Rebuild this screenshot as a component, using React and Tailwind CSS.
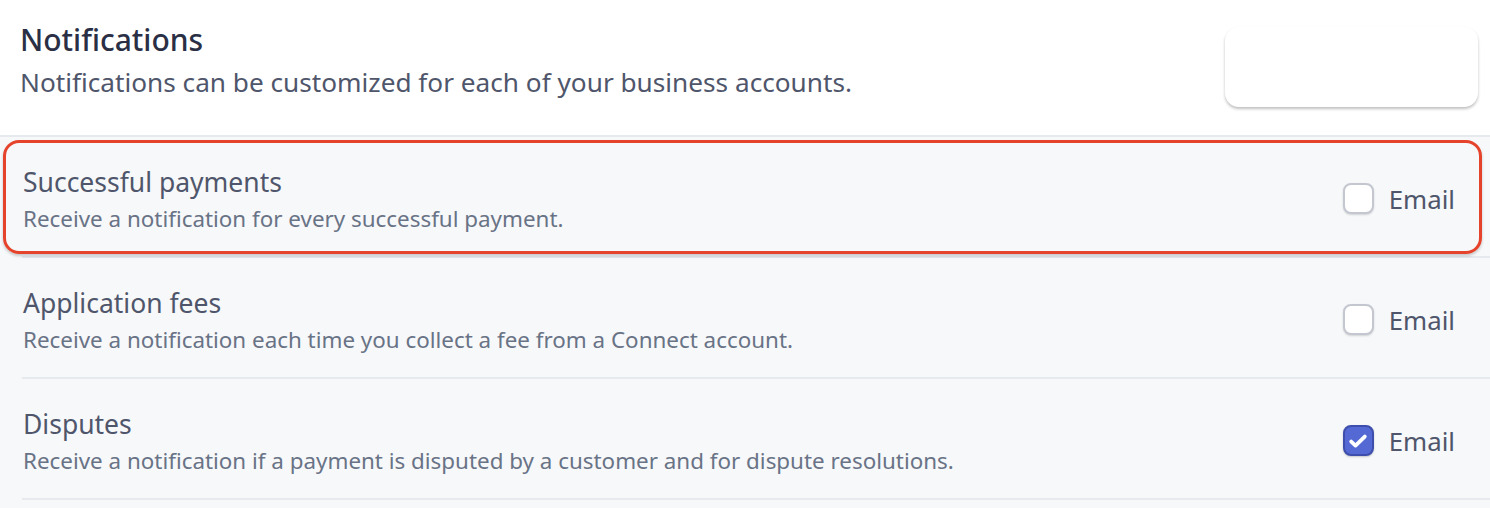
import React from "react";

const rows = [
  { title: "Successful payments", desc: "Receive a notification for every successful payment.", checked: false },
  { title: "Application fees", desc: "Receive a notification each time you collect a fee from a Connect account.", checked: false },
  { title: "Disputes", desc: "Receive a notification if a payment is disputed by a customer and for dispute resolutions.", checked: true },
];

function Checkbox({ checked }) {
  if (checked) {
    return (
      <div className="w-[31px] h-[31px] rounded-[8px] bg-[#5469d4] border-2 border-[#3d4eac] flex items-center justify-center shadow-[0_1px_2px_rgba(0,0,0,0.2)]">
        <svg width="22" height="22" viewBox="0 0 22 22" fill="none">
          <path d="M4.2 11.6l4.3 4L17.8 6.6" stroke="white" strokeWidth="3.8" strokeLinecap="round" strokeLinejoin="round" />
        </svg>
      </div>
    );
  }
  return (
    <div className="w-[31px] h-[31px] rounded-[8px] bg-white border-2 border-[#c4c7d0] shadow-[0_1px_2px_rgba(0,0,0,0.15)]" />
  );
}

export default function App() {
  return (
    <div className="w-[1490px] h-[508px] bg-[#f7f8fa] relative overflow-hidden" style={{ fontFamily: '"Noto Sans", "Open Sans", sans-serif' }}>
      <div className="h-[137px] bg-white border-b-2 border-[#e6e9ee] flex justify-between pl-[20px] pr-[12px]">
        <div className="pt-[21px]">
          <div className="text-[30px] leading-[38px] font-medium text-[#2a2f45]">Notifications</div>
          <div className="text-[26.2px] leading-[36px] mt-[5px] text-[#4f566b]">Notifications can be customized for each of your business accounts.</div>
        </div>
        <div className="mt-[27px] w-[253px] h-[80px] bg-white rounded-[14px] shadow-[0_2px_3px_rgba(0,0,0,0.25)]" />
      </div>
      <div className="pl-[22px]">
        {rows.map((r) => (
          <div key={r.title} className="h-[121px] border-b-2 border-[#e6e9ee] flex justify-between pr-[35px]">
            <div className="pt-[28px] pl-[1px]">
              <div className="text-[26.5px] leading-[34px] text-[#4f566b]">{r.title}</div>
              <div className="text-[22.4px] leading-[32px] mt-[4px] text-[#697386]">{r.desc}</div>
            </div>
            <div className="flex items-center gap-[15px] pt-[46px] h-fit">
              <Checkbox checked={r.checked} />
              <span className="text-[25.8px] leading-[30px] text-[#4f566b]">Email</span>
            </div>
          </div>
        ))}
      </div>
      <div className="absolute left-[3px] top-[140px] w-[1479px] h-[114px] rounded-[16px] border-[3px] border-[#e5432b] shadow-[0_2px_3px_rgba(0,0,0,0.2)]" />
    </div>
  );
}
